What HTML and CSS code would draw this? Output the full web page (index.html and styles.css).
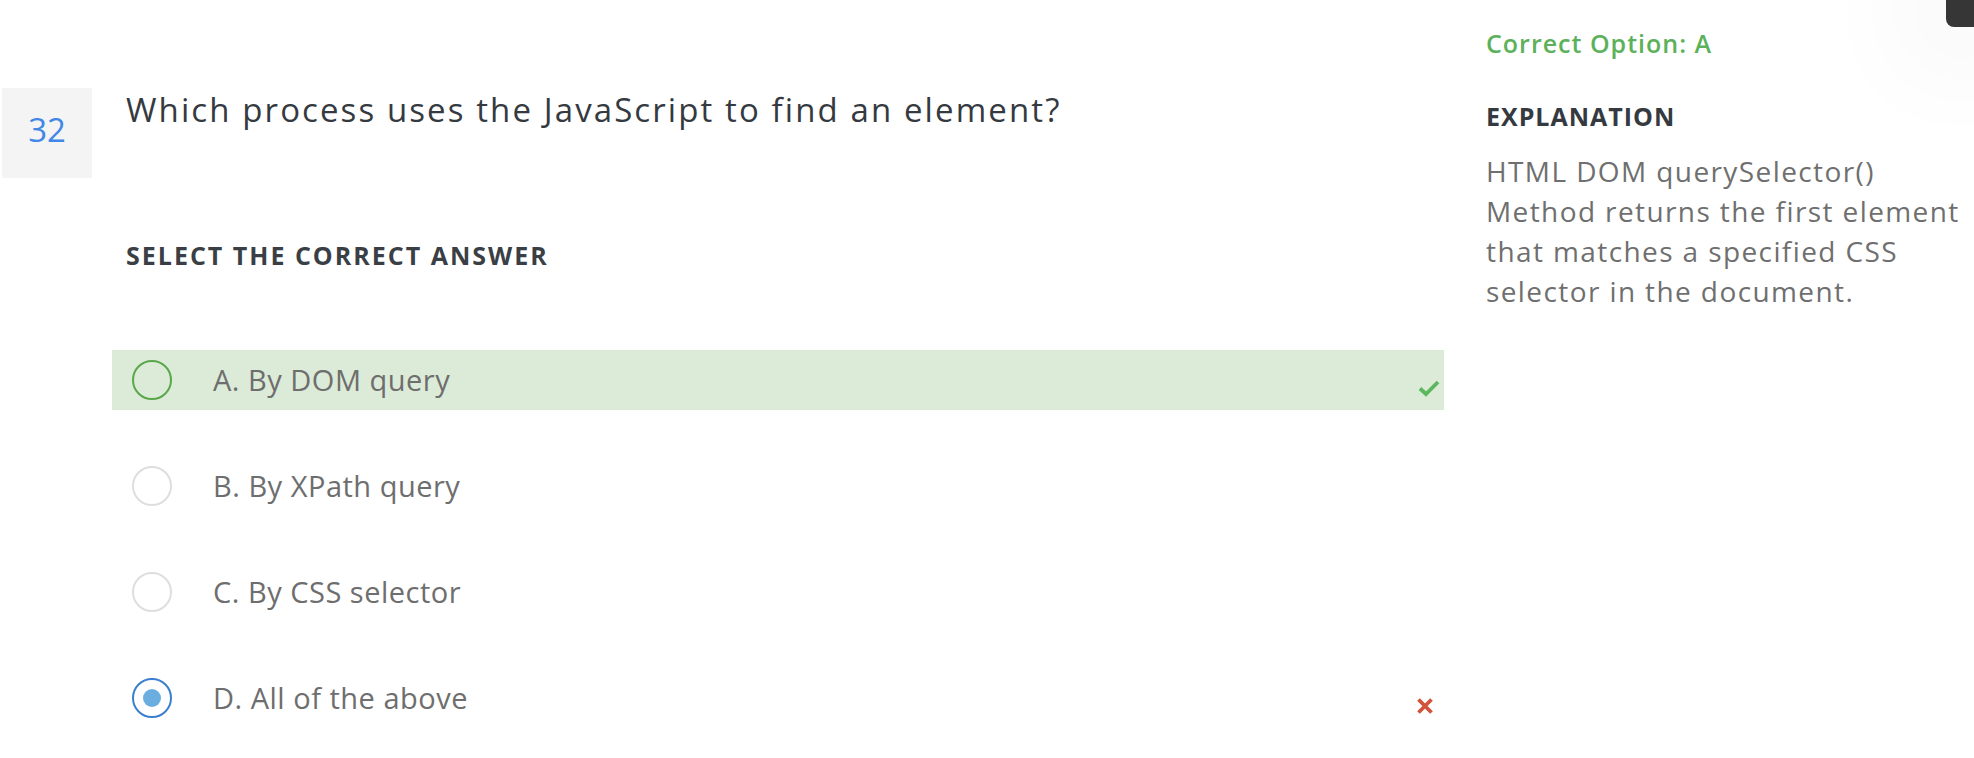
FILE: index.html
```html
<!DOCTYPE html>
<html lang="en">
<head>
<meta charset="utf-8">
<title>Question 32</title>
<link rel="stylesheet" href="styles.css">
</head>
<body>
<div class="page">
  <main class="main">
    <div class="q-head">
      <div class="q-num">32</div>
      <h1 class="q-text">Which process uses the JavaScript to find an element?</h1>
    </div>
    <h2 class="select-label">SELECT THE CORRECT ANSWER</h2>
    <ul class="options">
      <li class="option option-correct">
        <span class="radio radio-green"></span>
        <span class="opt-text">A. By DOM query</span>
        <svg class="icon icon-check" width="22" height="18" viewBox="0 0 22 18"><path d="M2 9.5 L8 15 L20 3" fill="none" stroke="#5cb85c" stroke-width="3.8"/></svg>
      </li>
      <li class="option">
        <span class="radio"></span>
        <span class="opt-text">B. By XPath query</span>
      </li>
      <li class="option">
        <span class="radio"></span>
        <span class="opt-text">C. By CSS selector</span>
      </li>
      <li class="option">
        <span class="radio radio-selected"><span class="dot"></span></span>
        <span class="opt-text">D. All of the above</span>
        <svg class="icon icon-cross" width="18" height="18" viewBox="0 0 18 18"><path d="M2.5 2.5 L15.5 15.5 M15.5 2.5 L2.5 15.5" fill="none" stroke="#d0533a" stroke-width="3.8"/></svg>
      </li>
    </ul>
  </main>
  <aside class="side">
    <div class="correct">Correct Option: A</div>
    <div class="expl-title">EXPLANATION</div>
    <p class="expl-text">HTML DOM querySelector()<br>Method returns the first element<br>that matches a specified CSS<br>selector in the document.</p>
  </aside>
</div>
<div class="corner"></div>
</body>
</html>
```
FILE: styles.css
```css
html, body {
  margin: 0;
  padding: 0;
  background: #ffffff;
}
body {
  font-family: "Open Sans", "Noto Sans", sans-serif;
  width: 1974px;
  height: 758px;
  overflow: hidden;
  position: relative;
}
.page {
  display: flex;
  align-items: flex-start;
}
.main {
  width: 1444px;
  padding-top: 88px;
}
.q-head {
  display: flex;
  align-items: flex-start;
}
.q-num {
  margin-left: 2px;
  width: 90px;
  height: 90px;
  box-sizing: border-box;
  padding-top: 25px;
  background: #f4f4f4;
  color: #4287e8;
  font-size: 33px;
  line-height: 33px;
  text-align: center;
}
.q-text {
  margin: 2px 0 0 34px;
  font-size: 33px;
  line-height: 40px;
  font-weight: 400;
  letter-spacing: 2.1px;
  color: #353a41;
}
.select-label {
  margin: 62px 0 0 126px;
  font-size: 25px;
  line-height: 30px;
  font-weight: 700;
  letter-spacing: 2px;
  color: #3a3f45;
}
.options {
  list-style: none;
  margin: 80px 0 0 112px;
  padding: 0;
  display: flex;
  flex-direction: column;
  gap: 46px;
}
.option {
  height: 60px;
  display: flex;
  align-items: center;
  padding: 0 4px 0 20px;
}
.option-correct {
  background: #dcebd7;
}
.radio {
  width: 40px;
  height: 40px;
  box-sizing: border-box;
  border-radius: 50%;
  border: 2px solid #dedede;
  flex: none;
  display: flex;
  align-items: center;
  justify-content: center;
}
.radio-green {
  border-color: #5aa64a;
}
.radio-selected {
  border-color: #3b7fcf;
}
.dot {
  width: 18px;
  height: 18px;
  border-radius: 50%;
  background: #6aaee0;
}
.opt-text {
  margin-left: 41px;
  font-size: 29px;
  line-height: 60px;
  letter-spacing: 0.5px;
  color: #6e6e6e;
}
.icon {
  margin-left: auto;
  align-self: flex-start;
  margin-top: 29px;
}
.icon-cross {
  margin-right: 6px;
}
.side {
  margin-left: 42px;
  padding-top: 28px;
  width: 488px;
}
.correct {
  font-size: 25px;
  line-height: 30px;
  font-weight: 600;
  letter-spacing: 1px;
  color: #5cb15a;
}
.expl-title {
  margin-top: 43px;
  font-size: 25px;
  line-height: 30px;
  font-weight: 700;
  letter-spacing: 1px;
  color: #353a41;
}
.expl-text {
  margin: 20px 0 0 0;
  font-size: 28px;
  line-height: 40px;
  letter-spacing: 1.4px;
  color: #6f6f6f;
  white-space: nowrap;
}
.corner {
  position: absolute;
  top: 0;
  right: 0;
  width: 28px;
  height: 27px;
  background: #363636;
  border-bottom-left-radius: 8px;
  box-shadow: 0 0 110px 40px rgba(0, 0, 0, 0.045);
}
```
